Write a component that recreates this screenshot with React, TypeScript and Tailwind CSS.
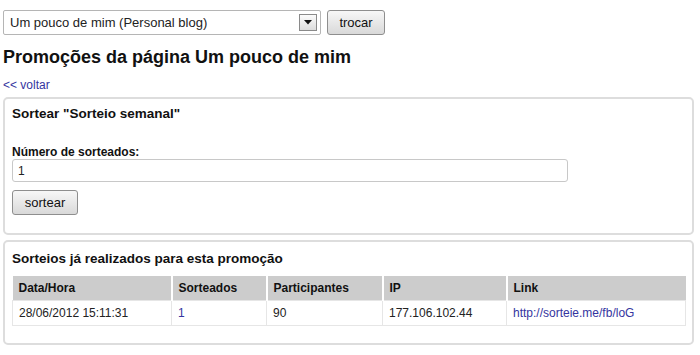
import React from "react";

const font = { fontFamily: '"Liberation Sans", Arial, sans-serif' };

export default function App() {
  return (
    <div className="w-[700px] h-[355px] bg-white text-[#111] pl-[3px] pr-[6px] pt-[10px]" style={font}>
      <div className="flex items-center gap-[6px]">
        <div className="w-[318px] h-[25px] border border-[#b5b5b5] rounded-[2px] bg-white flex items-center pl-[6px] pr-[3px]">
          <span className="flex-1 text-[13px] text-[#222] leading-[15px]">Um pouco de mim (Personal blog)</span>
          <div className="w-[18px] h-[17px] border border-[#8a8a8a] bg-gradient-to-b from-[#fbfbfb] to-[#dcdcdc] flex items-center justify-center">
            <svg width="8" height="5" viewBox="0 0 8 5"><path d="M0 0H8L4 4.5Z" fill="#111" /></svg>
          </div>
        </div>
        <button className="w-[58px] h-[25px] border border-[#8e8e8e] rounded-[3px] bg-gradient-to-b from-[#f7f7f7] to-[#d9d9d9] text-[13px] text-[#111] leading-[15px]">trocar</button>
      </div>

      <h1 className="mt-[12px] text-[18px] leading-[21px] font-bold text-[#111]">Promoções da página Um pouco de mim</h1>
      <a className="block mt-[10px] text-[12px] leading-[14px] text-[#3535a0]">&lt;&lt; voltar</a>

      <div className="mt-[5px] border-2 border-[#dddddd] rounded-[5px] px-[7px] pt-[7px] pb-[18px]">
        <h2 className="text-[13.5px] leading-[16px] font-bold">Sortear "Sorteio semanal"</h2>
        <div className="mt-[23px] text-[12px] leading-[14px] font-bold">Número de sorteados:</div>
        <div className="w-[556px] h-[23px] border border-[#c8c8c8] rounded-[3px] flex items-center pl-[5px] text-[12px] text-[#222]">1</div>
        <button className="mt-[8px] w-[66px] h-[25px] border border-[#8e8e8e] rounded-[3px] bg-gradient-to-b from-[#f7f7f7] to-[#d9d9d9] text-[13px] text-[#111] leading-[15px] block">sortear</button>
      </div>

      <div className="mt-[5px] border-2 border-[#dddddd] rounded-[5px] px-[7px] pt-[9px] pb-[17px]">
        <h2 className="text-[13.5px] leading-[16px] font-bold">Sorteios já realizados para esta promoção</h2>
        <table className="mt-[9px] w-[673px] border-collapse text-[12px] text-left table-fixed">
          <colgroup>
            <col className="w-[159px]" />
            <col className="w-[95px]" />
            <col className="w-[116px]" />
            <col className="w-[124px]" />
            <col className="w-[179px]" />
          </colgroup>
          <thead>
            <tr className="bg-[#cccccc] h-[24px]">
              <th className="font-bold pl-[6px] border-r-2 border-white">Data/Hora</th>
              <th className="font-bold pl-[6px] border-r-2 border-white">Sorteados</th>
              <th className="font-bold pl-[6px] border-r-2 border-white">Participantes</th>
              <th className="font-bold pl-[6px] border-r-2 border-white">IP</th>
              <th className="font-bold pl-[6px]">Link</th>
            </tr>
          </thead>
          <tbody>
            <tr className="h-[25px] text-[#222]">
              <td className="pl-[6px] border border-[#e6e6e6]">28/06/2012 15:11:31</td>
              <td className="pl-[6px] border border-[#e6e6e6] text-[#3535a0]">1</td>
              <td className="pl-[6px] border border-[#e6e6e6]">90</td>
              <td className="pl-[6px] border border-[#e6e6e6]">177.106.102.44</td>
              <td className="pl-[6px] border border-[#e6e6e6] text-[#3535a0]">http://sorteie.me/fb/loG</td>
            </tr>
          </tbody>
        </table>
      </div>
    </div>
  );
}
